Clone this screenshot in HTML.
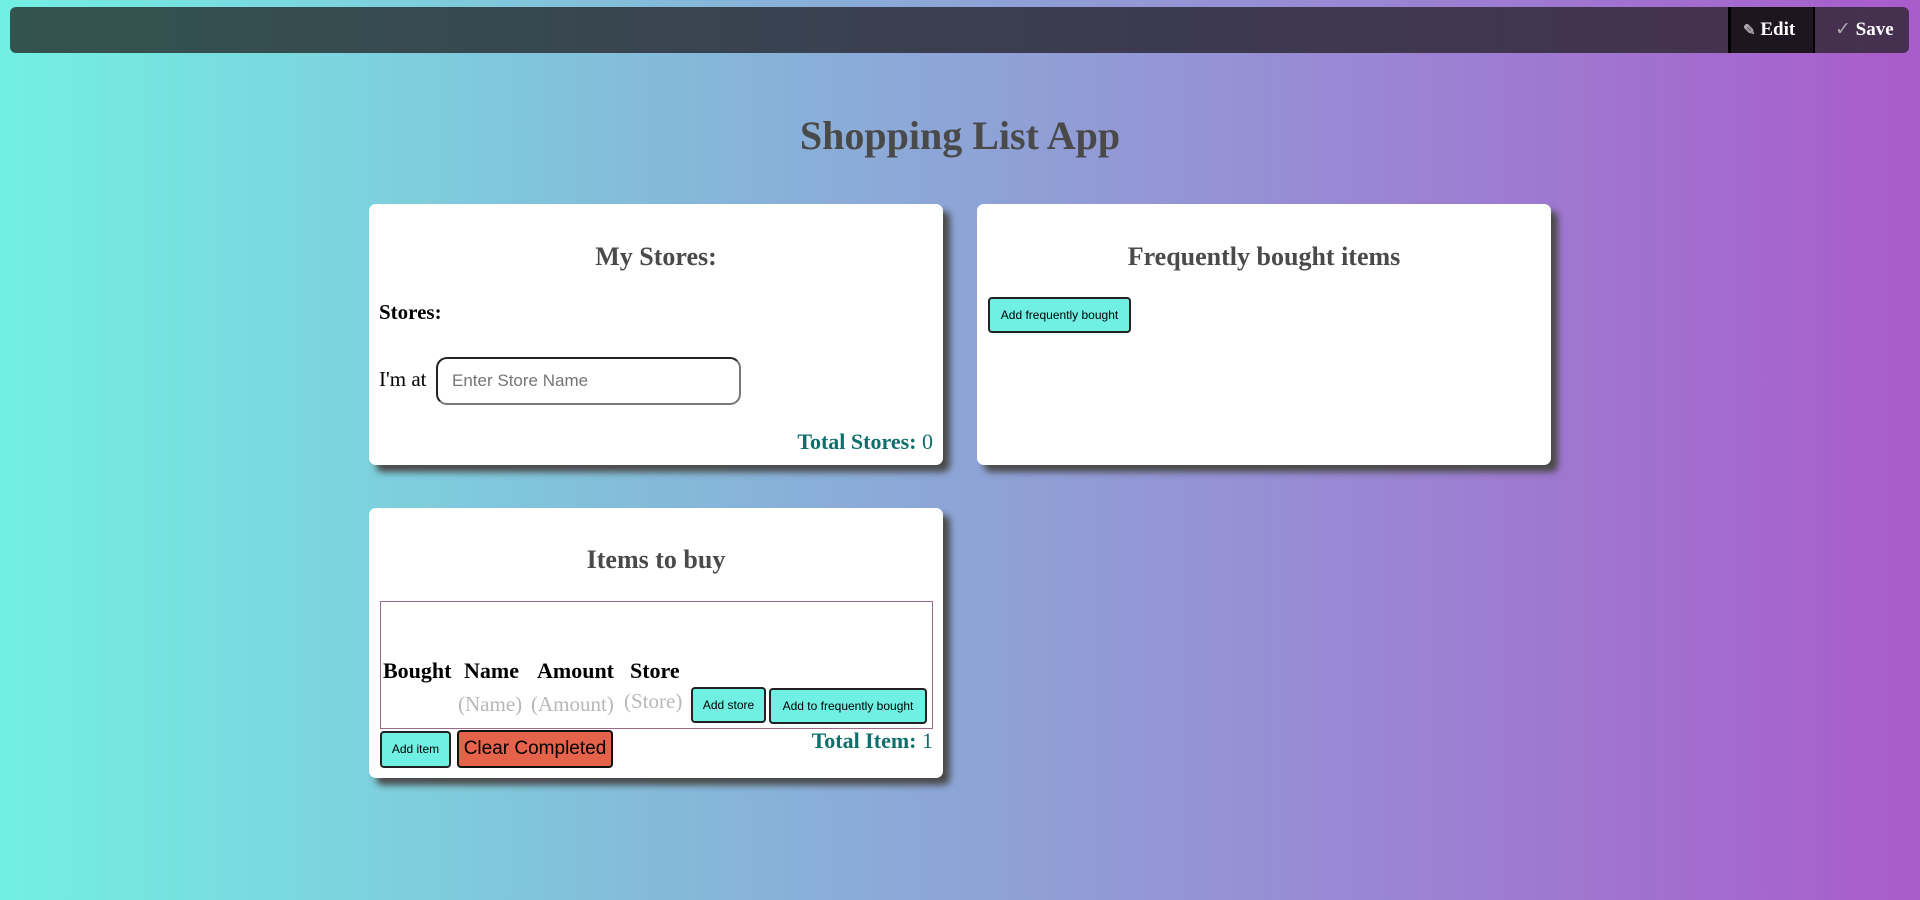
<!DOCTYPE html>
<html><head><meta charset="utf-8"><style>
*{box-sizing:border-box}
body{margin:0;width:1920px;height:900px;overflow:hidden;background:linear-gradient(90deg,#72efe3 0%,#85b9d9 35%,#9690d5 65%,#a95bcb 100%);font-family:"Liberation Serif",serif;position:relative}
.nav{position:absolute;left:10px;top:7px;width:1899px;height:46px;border-radius:6px;background:linear-gradient(90deg,#33534f,#3c3a50 60%,#46304f)}
.edit{position:absolute;left:1718px;top:0;width:87px;height:46px;background:#1d1620;border-left:3px solid #000;border-right:2px solid #000;color:#fff;font-weight:bold;font-size:19px;line-height:46px;padding-left:12px}
.save{position:absolute;left:1805px;top:0;width:94px;height:46px;color:#fff;font-weight:bold;font-size:19px;line-height:46px;padding-left:20px}
h1{position:absolute;top:110px;left:0;width:1920px;margin:0;text-align:center;font-size:40px;color:#4a4a4a;line-height:52px}
.card{position:absolute;background:#fff;border-radius:7px;box-shadow:7px 7px 7px #4a4a4a}
.h2{position:absolute;left:0;width:100%;text-align:center;font-weight:bold;font-size:26px;color:#4a4a4a}
.btn{position:absolute;background:#6ff0e3;border:2px solid #222;border-radius:4px;font-family:"Liberation Sans",sans-serif;font-size:12px;color:#000;text-align:center}
.teal{color:#0e6f6d;font-size:22px;position:absolute}
.ph{color:#b8b8b8;font-size:21px;position:absolute;top:0}
.th{position:absolute;top:150px;font-weight:bold;font-size:22px}
</style></head><body>
<div class="nav">
<div class="edit"><span style="color:#aaa;font-size:15px">✎</span> Edit</div>
<div class="save"><span style="color:#aaa;font-weight:normal">✓</span> Save</div>
</div>
<h1>Shopping List App</h1>

<div class="card" style="left:369px;top:204px;width:574px;height:261px">
<div class="h2" style="top:38px">My Stores:</div>
<div style="position:absolute;left:10px;top:96px;font-weight:bold;font-size:21px">Stores:</div>
<div style="position:absolute;left:10px;top:163px;font-size:21px">I'm at</div>
<div style="position:absolute;left:67px;top:153px;width:305px;height:48px;border:2px solid #222;border-bottom-color:#777;border-right-color:#777;border-radius:11px;font-family:'Liberation Sans',sans-serif;font-size:17px;color:#757575;padding:12px 0 0 14px">Enter Store Name</div>
<div class="teal" style="right:10px;top:225px"><b>Total Stores:</b> 0</div>
</div>

<div class="card" style="left:977px;top:204px;width:574px;height:261px">
<div class="h2" style="top:38px">Frequently bought items</div>
<div class="btn" style="left:11px;top:93px;width:143px;height:36px;line-height:32px">Add frequently bought</div>
</div>

<div class="card" style="left:369px;top:508px;width:574px;height:270px">
<div class="h2" style="top:37px">Items to buy</div>
<div style="position:absolute;left:11px;top:93px;width:553px;height:128px;border:1px solid #9a6a86"></div>
<div class="th" style="left:14px">Bought</div>
<div class="th" style="left:95px">Name</div>
<div class="th" style="left:168px">Amount</div>
<div class="th" style="left:261px">Store</div>
<div style="position:absolute;left:0;top:184px;width:400px;height:30px">
<span class="ph" style="left:89px">(Name)</span><span class="ph" style="left:162px">(Amount)</span><span class="ph" style="left:255px;top:-3px">(Store)</span></div>
<div class="btn" style="left:322px;top:179px;width:75px;height:36px;line-height:32px">Add store</div>
<div class="btn" style="left:400px;top:180px;width:158px;height:36px;line-height:32px">Add to frequently bought</div>
<div class="btn" style="left:11px;top:223px;width:71px;height:37px;line-height:33px">Add item</div>
<div class="btn" style="left:88px;top:222px;width:156px;height:38px;line-height:33px;background:#e5634b;font-size:19px;border-color:#111">Clear Completed</div>
<div class="teal" style="right:10px;top:220px"><b>Total Item:</b> 1</div>
</div>
</body></html>
